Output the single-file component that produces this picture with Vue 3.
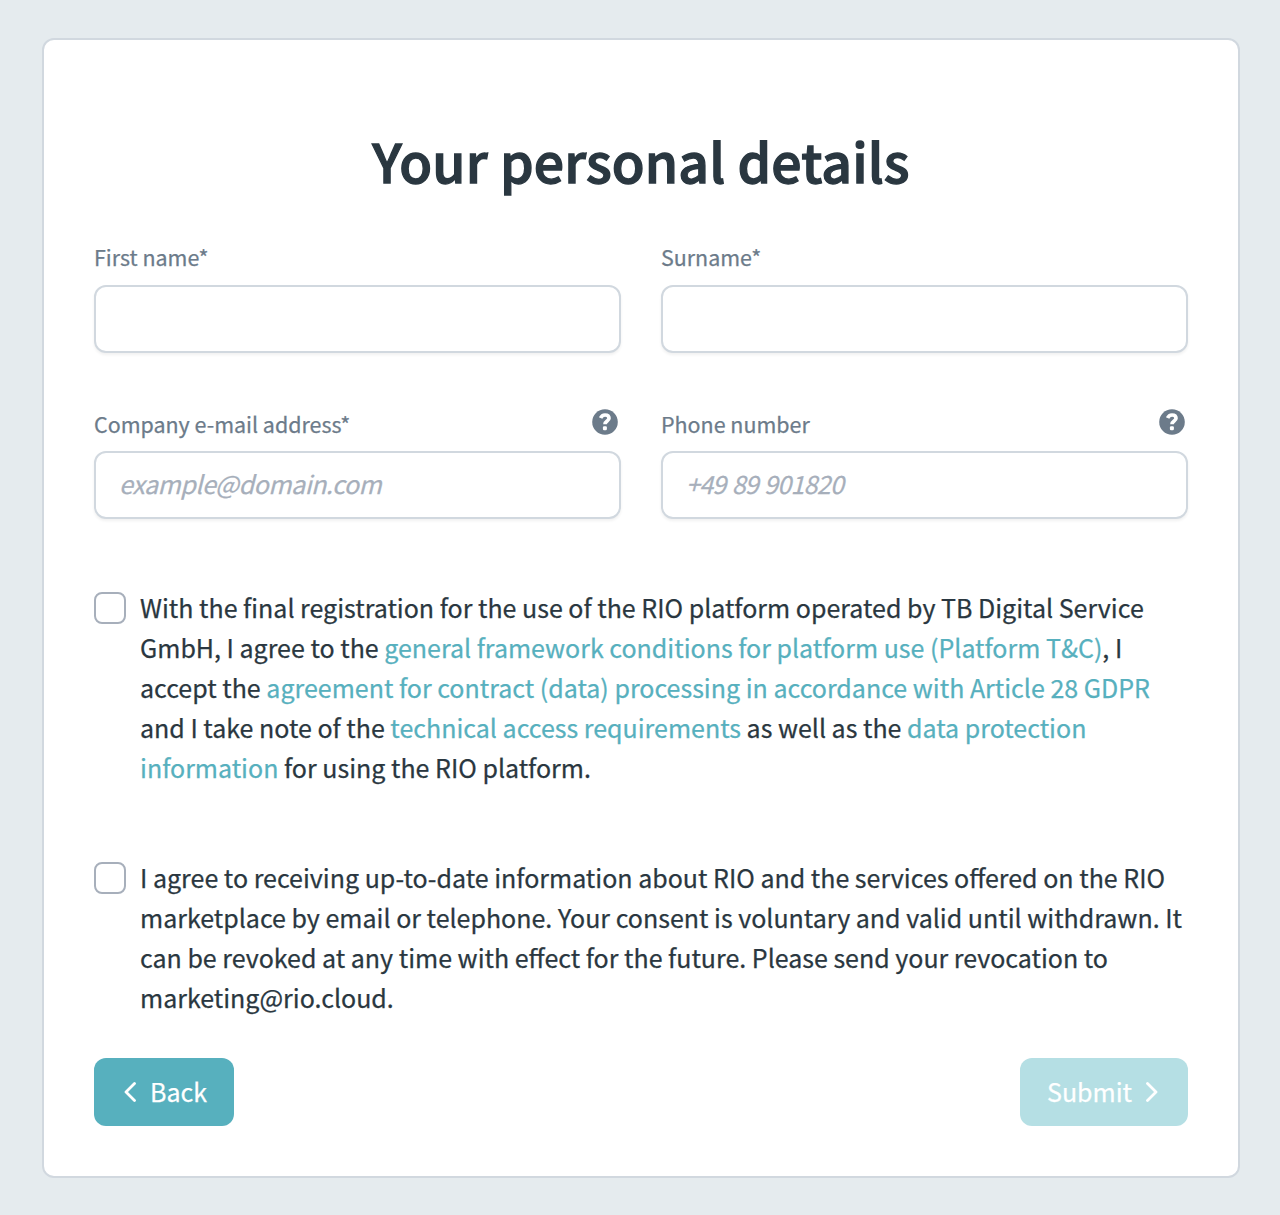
<script setup>
import { ref } from "vue"

const firstName = ref("")
const surname = ref("")
const email = ref("")
const phone = ref("")
const acceptTerms = ref(false)
const acceptMarketing = ref(false)
</script>

<template>
    <main class="page">
        <form class="card" @submit.prevent>
            <h1 class="title">Your personal details</h1>

            <div class="fields">
                <div class="field">
                    <label class="label" for="firstName">First name*</label>
                    <input id="firstName" v-model="firstName" class="input" type="text">
                </div>
                <div class="field">
                    <label class="label" for="surname">Surname*</label>
                    <input id="surname" v-model="surname" class="input" type="text">
                </div>
                <div class="field">
                    <div class="label-row">
                        <label class="label" for="email">Company e-mail address*</label>
                        <svg class="help-icon" viewBox="0 0 26 26">
                            <circle cx="13" cy="13" r="12.8" />
                            <path d="M8.6 9.1C9.5 7 11 6 13 6c2.3 0 4 1.2 4 3.3 0 2.9-4 2.6-4 6" />
                            <rect x="10.9" y="17.3" width="4" height="4" rx="1.2" />
                        </svg>
                    </div>
                    <input id="email" v-model="email" class="input" type="email" placeholder="example@domain.com">
                </div>
                <div class="field">
                    <div class="label-row">
                        <label class="label" for="phone">Phone number</label>
                        <svg class="help-icon" viewBox="0 0 26 26">
                            <circle cx="13" cy="13" r="12.8" />
                            <path d="M8.6 9.1C9.5 7 11 6 13 6c2.3 0 4 1.2 4 3.3 0 2.9-4 2.6-4 6" />
                            <rect x="10.9" y="17.3" width="4" height="4" rx="1.2" />
                        </svg>
                    </div>
                    <input id="phone" v-model="phone" class="input phone" type="tel" placeholder="+49 89 901820">
                </div>
            </div>

            <label class="consent">
                <input v-model="acceptTerms" class="checkbox" type="checkbox">
                <span class="consent-text">
                    With the final registration for the use of the RIO platform operated by TB Digital Service<br>
                    GmbH, I agree to the <a class="link">general framework conditions for platform use (Platform T&amp;C)</a>, I<br>
                    accept the <a class="link">agreement for contract (data) processing in accordance with Article 28 GDPR</a><br>
                    and I take note of the <a class="link">technical access requirements</a> as well as the <a class="link">data protection<br>
                    information</a> for using the RIO platform.
                </span>
            </label>

            <label class="consent">
                <input v-model="acceptMarketing" class="checkbox" type="checkbox">
                <span class="consent-text">
                    I agree to receiving up-to-date information about RIO and the services offered on the RIO<br>
                    marketplace by email or telephone. Your consent is voluntary and valid until withdrawn. It<br>
                    can be revoked at any time with effect for the future. Please send your revocation to<br>
                    marketing@rio.cloud.
                </span>
            </label>

            <div class="actions">
                <button class="btn back" type="button">
                    <svg class="chevron" viewBox="0 0 12 20"><path d="M10.5 1.5 2 10l8.5 8.5" /></svg>
                    <span class="btn-text">Back</span>
                </button>
                <button class="btn submit" type="submit" disabled>
                    <span class="btn-text">Submit</span>
                    <svg class="chevron" viewBox="0 0 12 20"><path d="M1.5 1.5 10 10l-8.5 8.5" /></svg>
                </button>
            </div>
        </form>
    </main>
</template>

<style>
body {
    background-color: #e5ebee;
}
</style>

<style scoped>
.page {
    box-sizing: border-box;
    height: 1215px;
    padding: 38px 40px 37px 42px;
    font-family: "Noto Sans CJK SC", "Open Sans", sans-serif;
    color: #2a3740;
    -webkit-text-stroke: 0.25px;
}

.card {
    box-sizing: border-box;
    height: 1140px;
    padding: 80px 50px 50px;
    border: 2px solid #d1d8df;
    border-radius: 12px;
    background-color: #fff;
}

.title {
    margin: 0;
    font-size: 53.5px;
    font-weight: 500;
    line-height: 80px;
    letter-spacing: 0.15px;
    text-align: center;
    -webkit-text-stroke: 1.3px;
}

.fields {
    display: grid;
    grid-template-columns: 1fr 1fr;
    gap: 58px 40px;
    padding-top: 44px;
}

.field {
    display: flex;
    flex-direction: column;
    justify-content: space-between;
    height: 109px;
}

.field:nth-child(n + 3) {
    height: 108px;
}

.label-row {
    display: flex;
    align-items: flex-start;
    justify-content: space-between;
}

.label {
    font-size: 21.45px;
    line-height: 26px;
    color: #6c7b8a;
}

.help-icon {
    width: 26px;
    height: 26px;
    margin: -2px 3px 0 0;
    fill: #6c7b8a;
}

.help-icon path {
    fill: none;
    stroke: #fff;
    stroke-width: 3.7;
}

.help-icon rect {
    fill: #fff;
}

.input {
    box-sizing: border-box;
    width: 100%;
    height: 68px;
    padding: 0 23px 4px;
    border: 2px solid #d1d8df;
    border-radius: 12px;
    background-color: #fff;
    box-shadow: 0 2px 3px rgba(0, 0, 0, 0.06);
    font-family: inherit;
    font-size: 25px;
    outline: none;
}

.input::placeholder {
    font-style: italic;
    letter-spacing: -0.45px;
    color: #a7afbb;
    opacity: 1;
    -webkit-text-stroke: 0.25px;
}

.phone::placeholder {
    letter-spacing: -0.7px;
    word-spacing: 1.2px;
}

.consent {
    display: flex;
    gap: 14px;
    margin-top: 68px;
}

.checkbox {
    appearance: none;
    box-sizing: border-box;
    flex: none;
    width: 32px;
    height: 32px;
    margin: 5px 0 0;
    border: 2px solid #a7afbb;
    border-radius: 8px;
    background-color: #fff;
}

.consent-text {
    font-size: 25.01px;
    line-height: 40px;
    white-space: nowrap;
}

.consent + .consent {
    margin-top: 70px;
}

.link {
    color: #57b0be;
}

.actions {
    display: flex;
    justify-content: space-between;
    margin-top: 41px;
}

.btn {
    display: flex;
    align-items: center;
    box-sizing: border-box;
    height: 68px;
    padding: 0 26px;
    border: 0;
    border-radius: 12px;
    background-color: #57b0be;
    color: #fff;
    font-family: inherit;
    font-size: 25px;
}

.btn-text {
    padding-bottom: 3px;
    -webkit-text-stroke: 0.25px;
}

.back {
    gap: 14px;
    width: 140px;
    padding-left: 30px;
}

.submit {
    gap: 14px;
    width: 168px;
    padding-left: 27px;
    background-color: #b5dfe4;
}

.chevron {
    width: 12px;
    height: 20px;
    fill: none;
    stroke: #fff;
    stroke-width: 2.8;
    stroke-linecap: round;
    stroke-linejoin: round;
}
</style>
